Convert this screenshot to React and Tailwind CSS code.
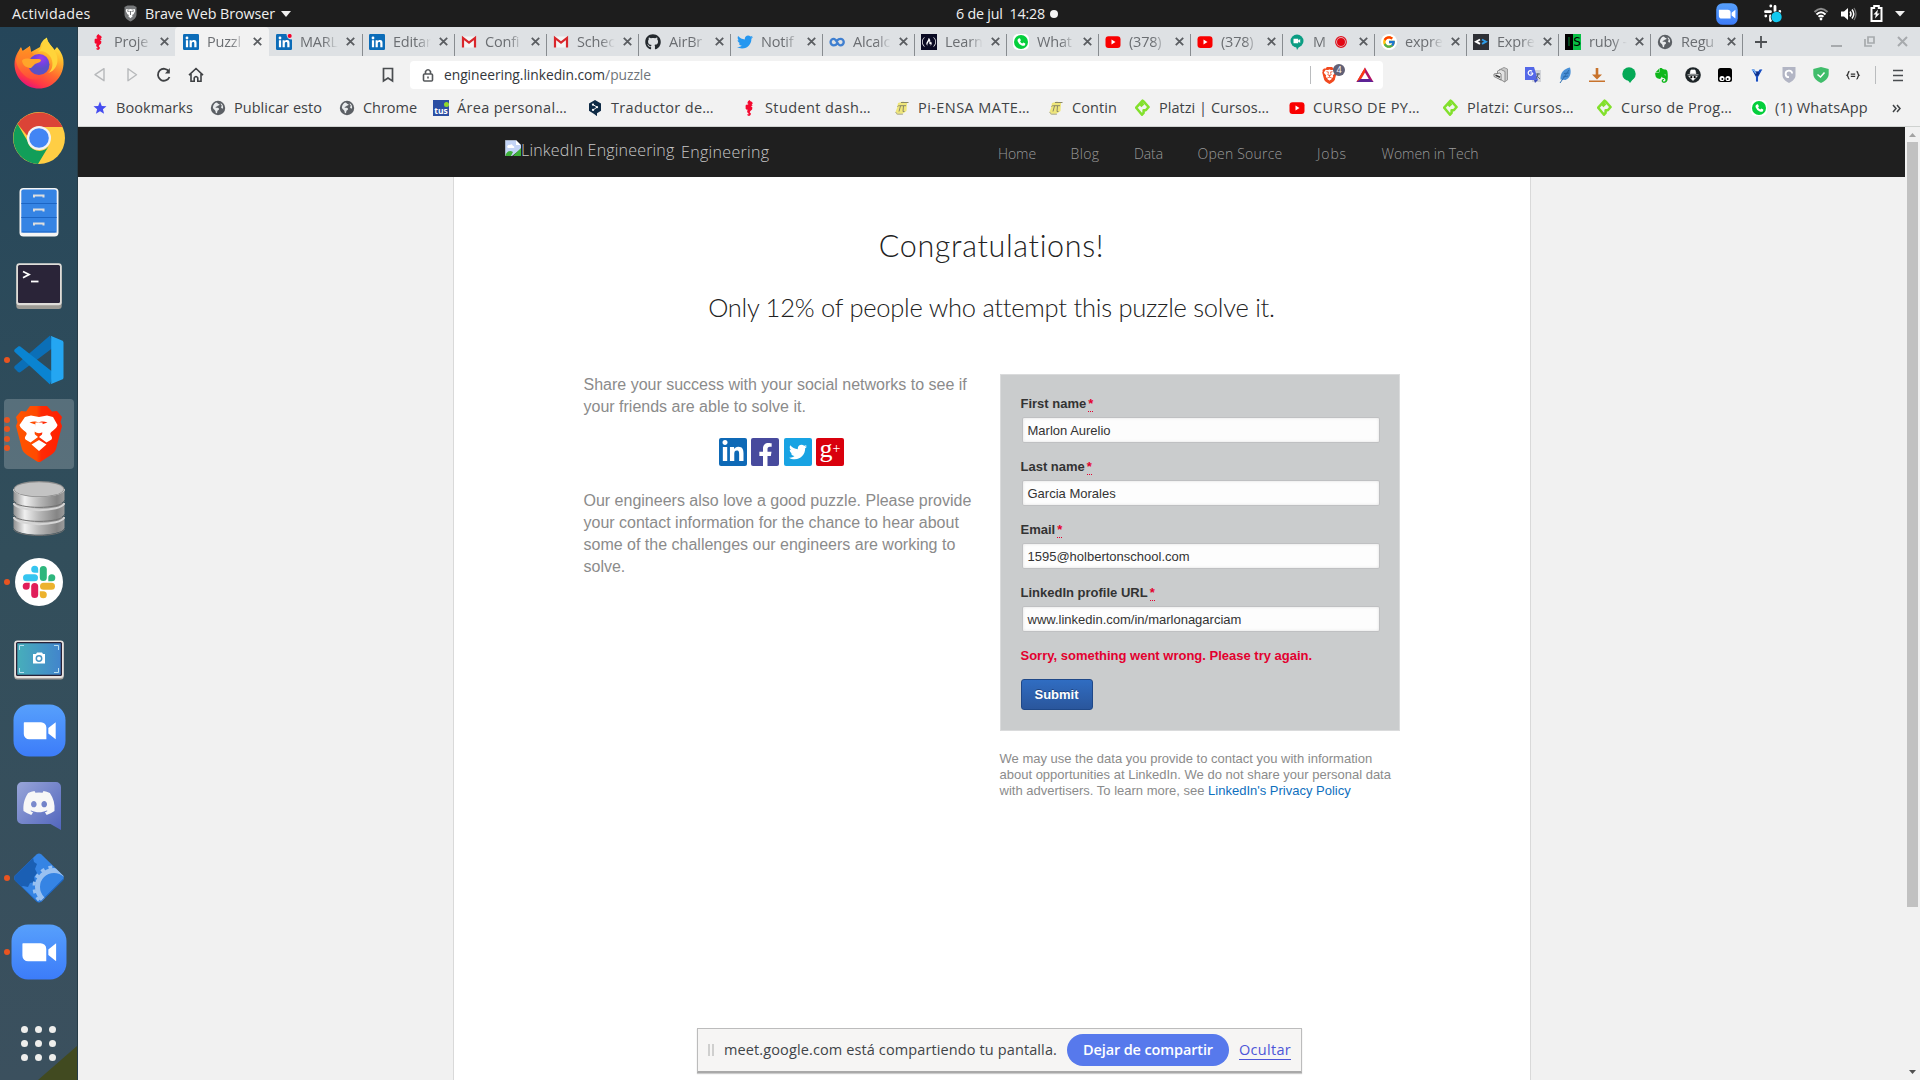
import React, { useLayoutEffect, useRef } from "react";
import { FaGithub, FaTwitter, FaFacebookF, FaLinkedinIn, FaDiscord, FaEvernote } from "react-icons/fa";
import { SiBrave, SiFreecodecamp } from "react-icons/si";
import { FcGoogle } from "react-icons/fc";

/* Text tracked so that it fills exactly `w` pixels. */
function Fit({ w, className = "", children }) {
  const ref = useRef(null);
  useLayoutEffect(() => {
    const el = ref.current;
    el.style.letterSpacing = "0px";
    const natural = el.getBoundingClientRect().width;
    el.style.letterSpacing = `${(w - natural) / el.textContent.length}px`;
  }, [w]);
  return (
    <span ref={ref} className={`inline-block whitespace-pre shrink-0 ${className}`}>
      {children}
    </span>
  );
}

/* ---------- small icons ---------- */
const LinkedIn = ({ dot }) => (
  <svg width="16" height="16" viewBox="0 0 16 16">
    <rect width="16" height="16" rx="1.2" fill="#0c6cb8" />
    <circle cx="4" cy="4" r="1.4" fill="#fff" />
    <path d="M2.9 6.2h2.2v7H2.9zM6.6 6.2h2.1v1c.4-.7 1.200-1.200 2.300-1.200 2 0 2.500 1.300 2.500 3.100v4.100h-2.200V9.600c0-1-.2-1.700-1.100-1.700s-1.400.7-1.400 1.700v3.600H6.600z" fill="#fff" />
    {dot && <path d="M10.500 0H16v5.500q-5.500 0-5.500-5.500z" fill="#dee1e4" />}
    {dot && <circle cx="13.700" cy="1.900" r="2" fill="#f5002b" />}
  </svg>
);
const Seahorse = () => (
  <svg width="16" height="16" viewBox="0 0 16 16" fill="#f5082f">
    <path d="M8.500 0l1 1.200 1.700.8.5 2-1 .2.900 1.500-1.700.3 1.500 1.500-.3 2-1.700 1.600-.7 1.200 1.200 1.200-.3 1.600-1.500.9-1.500-.6-.3-1.300 1.100.3.200-.9-1-.7-.5-1.500.6-1.500-1.500-.2-.8-1.600.6-1.200-.7-.4L5 4.700l1.300.1 1.300-.9-1.300-.6L7 1.300z" />
  </svg>
);
const Gmail = () => (
  <svg width="16" height="16" viewBox="0 0 16 16">
    <path d="M1.500 2.500h13v11h-13z" fill="#f4f4f4" />
    <path d="M2 13.500V4L8 8.600 14 4v9.500" fill="none" stroke="#d9262b" strokeWidth="2.200" />
  </svg>
);
const Globe = () => (
  <svg width="16" height="16" viewBox="0 0 16 16">
    <circle cx="8" cy="8" r="7.200" fill="#5c6065" />
    <path d="M6.500 2.500c1.300.2.900 1.300 2.400 1.400 1.100.1.800 1.500-.5 1.700-1.200.2-1 1.300-2.300 1.200-.8 0-.9 1 .4.900 1.500 0 2.700.3 2.500 1.500s-1.700 1-1.700 2.300c0 .9-.3 1.800-1.100 1.700-.8-.2-.3-1.700-1.100-2.700-.7-.9-2-1.500-2.200-3C3 5.200 4.700 2.800 6.500 2.500z" fill="#e9ebed" />
    <path d="M10.800 3.300c1.800 1 2.700 3.200 2.200 5.200-.8.200-1.600-.2-1.900-1-.3-.8.900-1.200.6-2-.3-.6-1.400-.9-.9-2.200z" fill="#e9ebed" />
  </svg>
);
const YouTube = () => (
  <svg width="16" height="16" viewBox="0 0 16 16">
    <rect x=".5" y="2.300" width="15" height="11.600" rx="3" fill="#f90000" />
    <path d="M6.500 5.500v5l4-2.500z" fill="#fff" />
  </svg>
);
const Infinity2 = () => (
  <svg width="16" height="16" viewBox="0 0 16 16" fill="none" stroke="#3f7fd0" strokeWidth="2.300">
    <path d="M8.500 9.200C7.500 10.500 6.200 11.300 4.800 11.300a3.200 3.200 0 010-6.500C7.800 4.800 8.200 11.300 11.500 11.300a3.200 3.200 0 000-6.500C10 4.800 9 5.400 8.200 6.500" />
  </svg>
);
const Fcc = () => (
  <span className="flex h-4 w-4 items-center justify-center bg-[#0a0a23] text-white">
    <SiFreecodecamp size={14} />
  </span>
);
const Whats = () => (
  <span className="flex h-4 w-4 items-center justify-center rounded-[5px] bg-white">
    <span className="flex h-[14px] w-[14px] items-center justify-center rounded-full bg-[#05cf3c] text-white">
      <svg width="10" height="10" viewBox="0 0 10 10"><path d="M2.700 1.500l1.200-.2 1 2-.8 1.200q.8 1.500 2.200 2L7.300 5.600l2 1-.2 1.300q-1.200 1.500-3.400.5Q2.500 7 1.500 4 1.300 2.300 2.700 1.500z" fill="#fff" /></svg>
    </span>
  </span>
);
const Meet = () => (
  <svg width="16" height="16" viewBox="0 0 16 16">
    <circle cx="8" cy="7" r="6.500" fill="#0b9d83" />
    <path d="M7 12l3 .8L8 16z" fill="#0b9d83" />
    <path d="M4.500 4.800h4.700v1.600l2-1.400v4l-2-1.400v1.600H4.500z" fill="#fff" />
  </svg>
);
const GoogleIcon = () => (
  <span className="flex h-4 w-4 items-center justify-center rounded-full bg-white">
    <FcGoogle size={14} />
  </span>
);
const Code = () => (
  <svg width="16" height="16" viewBox="0 0 16 16">
    <rect width="16" height="16" fill="#2e3036" />
    <path d="M7 5.500L3 7.700 7 9.900" stroke="#fff" strokeWidth="1.900" fill="none" />
    <path d="M9 5.500l4 2.200-4 2.200" stroke="#2f9be8" strokeWidth="1.900" fill="none" />
  </svg>
);
const IS = () => (
  <span className="flex h-4 w-4 font-['DejaVu_Sans'] text-[12px] leading-4">
    <span className="w-2 bg-black text-center text-[#0a6b2b]">I</span>
    <span className="w-2 bg-[#07c044] text-center text-black">S</span>
  </span>
);
const Star = () => (
  <svg width="16" height="16" viewBox="0 0 16 16" fill="#454cf0">
    <path d="M8 1.500l1.800 4.400 4.700.3-3.600 3 1.200 4.600L8 11.300l-4.100 2.500 1.200-4.600-3.600-3 4.700-.3z" />
  </svg>
);
const Tus = () => (
  <span className="relative flex h-4 w-4 items-end justify-center bg-[#2c4fa3] font-['Open_Sans'] text-[8.500px] font-bold leading-[11px] text-white">
    tus
    <span className="absolute right-0 top-0.5 h-[5px] w-[5px] rounded-full bg-[#93d82b]" />
  </span>
);
const Deepl = () => (
  <svg width="16" height="16" viewBox="0 0 16 16">
    <path d="M8 0l6 3.500v7.300L10 13.300v2.900L7.500 14.300 2 10.800V3.500z" fill="#0f2b46" />
    <path d="M6 4.500l4 2.700-4 2.900" stroke="#fff" strokeWidth=".9" fill="none" />
    <circle cx="6" cy="4.700" r="1.100" fill="#fff" /><circle cx="10" cy="7.200" r="1.100" fill="#fff" /><circle cx="6" cy="9.900" r="1.100" fill="#fff" />
  </svg>
);
const Pi = () => (
  <svg width="16" height="16" viewBox="0 0 16 16">
    <path d="M4 3l5-1.500L13 3l-.5 8-5 3.500H2.500L1.500 12 3 8z" fill="#efe67a" />
    <path d="M7 2.500h7.500M3.500 6.500q1-1 2-.8H12M6.500 6L5 11.500M9.500 6L9 11.500h1.500" stroke="#8b8868" strokeWidth="1" fill="none" />
    <path d="M1.500 12l1.800 2.200H9" stroke="#a9a9a0" fill="none" />
  </svg>
);
const Platzi = () => (
  <svg width="16" height="18" viewBox="0 0 16 18" fill="none" stroke="#82e02c" strokeWidth="2.500" strokeLinejoin="round">
    <path d="M8.500 4.500L5.500 7.200M9.500 3.200L7.600 1.600 1.200 8.700l5.800 7 1.600-1.800v-2.700h2.200L13.600 8 9.200 3.200" />
  </svg>
);

/* ---------- top bar icons ---------- */
const Camera = ({ size, inner }) => (
  <svg width={size} height={size} viewBox="0 0 54 54">
    <defs>
      <linearGradient id="zoomblue" x1="0" y1="0" x2="0" y2="1">
        <stop offset="0" stopColor="#57a0fc" /><stop offset="1" stopColor="#3c7cf9" />
      </linearGradient>
    </defs>
    <rect x=".5" y=".5" width="53" height="53" rx="16" fill="url(#zoomblue)" />
    <g transform={inner ? "translate(-6.700 -6.700) scale(1.250)" : undefined}>
      <path d="M11.500 18.500h17a5.500 5.500 0 015.500 5.500v12H16.500a5.500 5.500 0 01-5.500-5.500v-11.500zM36 24.500l7.500-6V36l-7.500-6z" fill="#fff" />
    </g>
  </svg>
);

function TopBar() {
  return (
    <header className="flex h-[27px] shrink-0 items-center bg-[#1d1d1d] font-['Open_Sans'] text-[14.300px] leading-[26px] text-[#efefef]">
      <div className="flex w-[123px] pl-3"><Fit w={78.500}>Actividades</Fit></div>
      <div className="flex w-[833px] items-center">
        <svg width="15" height="17" viewBox="0 0 15 17">
          <path d="M1.500 2l3-1.500h6l3 1.500v7c0 4-3 6-6 7.500-3-1.500-6-3.500-6-7.500z" fill="#77797b" />
          <path d="M3.200 4l2.300.6L7.500 4l2 .6L11.800 4l.4 2-1.700 3.200-1.500.8.700 1.300-2.200 2-2.200-2 .7-1.300-1.500-.8L2.800 6z" fill="#fff" />
          <path d="M4 5.800l2.500.7M11 5.800l-2.500.7M7.500 6v4" stroke="#77797b" />
        </svg>
        <Fit w={130} className="ml-[7px]">Brave Web Browser</Fit>
        <svg className="ml-1.5" width="10" height="6"><path d="M0 0h10L5 6z" fill="#efefef" /></svg>
      </div>
      <div className="flex w-[760px] items-center"><Fit w={89}>6 de jul  14:28</Fit><span className="ml-[5px] h-2 w-2 rounded-full bg-[#f4f4f4]" /></div>
      <Camera size={22} inner />
      <svg className="ml-[25px]" width="20" height="19" viewBox="0 0 20 19">
        <g stroke="#fff" strokeWidth="2.800" strokeLinecap="round"><path d="M7.800 2v.1M2.500 7.700h5M12 2.500v4.500M16.800 7.500v.1M2.800 12v.1M7.500 12v4.500" /></g>
        <circle cx="13.500" cy="13" r="5.800" fill="#1d1d1d" /><circle cx="13.500" cy="13" r="5.200" fill="#12c9f0" />
      </svg>
      <svg className="ml-[30px]" width="16" height="14" viewBox="0 0 16 14" fill="none" strokeWidth="2">
        <path d="M1.500 5Q8 -1.500 14.500 5" stroke="#8c8c8c" /><path d="M3.500 7.500Q8 3 12.500 7.500" stroke="#fff" /><path d="M5.500 9.800Q8 7.600 10.500 9.800" stroke="#fff" /><circle cx="8" cy="12" r="1.400" fill="#fff" stroke="none" />
      </svg>
      <svg className="ml-3" width="16" height="14" viewBox="0 0 16 14" fill="none">
        <path d="M0 4.500h3L7 1v12L3 9.500H0z" fill="#fff" /><path d="M9 4.500q2 2.500 0 5M11 2.500q3.500 4.500 0 9" stroke="#fff" strokeWidth="1.500" /><path d="M13 1q4 6 0 12" stroke="#777" strokeWidth="1.300" />
      </svg>
      <svg className="ml-[13px]" width="13" height="17" viewBox="0 0 13 17">
        <path d="M1.500 3h2.700V1h4.600v2h2.700v13h-10z" fill="none" stroke="#fff" strokeWidth="2" /><path d="M8 4.500L3.500 9.500h2.300L5 13.500l4.700-5H7.200z" fill="#fff" />
      </svg>
      <svg className="ml-3" width="10" height="6"><path d="M0 0h10L5 5.500z" fill="#efefef" /></svg>
    </header>
  );
}

/* ---------- dock ---------- */
const Firefox = () => (
  <svg width="50" height="52" viewBox="0 0 50 52">
    <defs>
      <linearGradient id="ff1" x1=".8" y1="0" x2=".3" y2="1"><stop offset="0" stopColor="#fff44f" /><stop offset=".3" stopColor="#ffbd2c" /><stop offset=".6" stopColor="#ff6a2e" /><stop offset=".85" stopColor="#ff3647" /><stop offset="1" stopColor="#e3107f" /></linearGradient>
      <radialGradient id="ff2" cx=".6" cy=".2"><stop offset="0" stopColor="#a23ce8" /><stop offset=".6" stopColor="#7242e0" /><stop offset="1" stopColor="#5b51c4" /></radialGradient>
      <linearGradient id="ff3" x1="0" y1="0" x2="0" y2="1"><stop offset="0" stopColor="#ff9420" /><stop offset=".5" stopColor="#ff7a2a" /><stop offset="1" stopColor="#ff4a3c" /></linearGradient>
    </defs>
    <path d="M.5 27C.5 19 4 15 7 10l1.500 4L16 9l1 6 9-5C27 5 30 2 33 .5c0 5 4 7 7.500 12.500L43 10c5 6 7 11 6.500 17.500C48.500 41 38 51.500 25 51.500S.5 41 .5 27z" fill="url(#ff1)" />
    <path d="M24 15c4-2 9 0 12 4 4 6 3 14-2 17 7-2 11-9 9-17-2-7-8-11-10-17-6 5-4 9-9 13z" fill="#ffd43a" />
    <circle cx="25" cy="27.500" r="10.500" fill="url(#ff2)" />
    <path d="M2 24c1-6 3-10 5-13l2 4 7-6c0 4 1 7 4 8l-5 5c-2 5-1 10 2 13 4 4 10 5 15 3-6 6-16 6-22 0-4-4-7-8-8-14z" fill="url(#ff3)" />
    <path d="M8 24c0-2 4-3 8-2h8c3 0 4 1 2 3l-5 2-4 4c-4 0-8-2-9-7z" fill="#ffa52a" />
  </svg>
);
const Chrome = () => (
  <svg width="52" height="52" viewBox="0 0 52 52">
    <circle cx="26" cy="26" r="26" fill="#ffce44" />
    <path d="M4.500 12A26 26 0 0149.500 15H26a12 12 0 00-11.500 9z" fill="#db4437" />
    <path d="M4.500 12A26 26 0 0025 52l10.500-17.500A12 12 0 0114.500 29z" fill="#129e59" />
    <circle cx="26" cy="26" r="12" fill="#f3f3f3" /><circle cx="26" cy="26" r="9.800" fill="#4285f4" />
  </svg>
);
const Files = () => (
  <svg width="40" height="50" viewBox="0 0 40 50">
    <rect x=".5" y="1" width="39" height="48.500" rx="4" fill="#f5f5f4" /><rect x="2.300" y="2.500" width="35.400" height="43" rx="2" fill="#3584e4" />
    <path d="M2.300 16.500h35.400M2.300 30.500h35.400M2.300 45h35.400" stroke="#1c65c4" />
    {[8, 22, 36].map((y) => <path key={y} d={`M15 ${y + 2.500}v-2h9.500v2`} fill="none" stroke="#dedede" strokeWidth="2" />)}
  </svg>
);
const Terminal = () => (
  <svg width="46" height="46" viewBox="0 0 46 46">
    <rect x=".3" y="2" width="45.400" height="44" rx="3" fill="#9c9a94" /><rect x=".3" y=".3" width="45.400" height="42" rx="3" fill="#dfddd9" /><rect x="2" y="2" width="42" height="38" rx="1.500" fill="#2a2438" />
    <path d="M7 8.500l6 3-6 3.200" fill="none" stroke="#fff" strokeWidth="1.800" /><path d="M15 18.500h7.500" stroke="#fff" strokeWidth="1.800" />
  </svg>
);
const VsCode = () => (
  <svg width="50" height="50" viewBox="0 0 50 50">
    <path d="M36 .5L.8 31c-.8.8-.8 2 0 2.800L4 37c.8.6 1.900.6 2.600 0L40 12z" fill="#0b6fb7" />
    <path d="M36 49.500L.8 17c-.8-.8-.8-2 0-2.800L4 11.800c.8-.6 1.900-.6 2.600 0L40 38z" fill="#0a84d1" />
    <path d="M36 .5l12 5c1 .4 1.500 1.200 1.500 2.300v34.400c0 1.100-.5 1.900-1.500 2.300l-12 5c1 0 1.200-1 1.200-2V2.500c0-1-.2-2-1.200-2z" fill="#24a6f2" />
  </svg>
);
const Brave = () => (
  <svg width="48" height="56" viewBox="0 0 48 56">
    <defs><linearGradient id="brv"><stop offset="0" stopColor="#ff5500" /><stop offset=".45" stopColor="#ff4a00" /><stop offset=".55" stopColor="#ff2a05" /><stop offset="1" stopColor="#ff2000" /></linearGradient></defs>
    <path d="M15 0h17l5 5.500 5-.5 5 6-1.500 5L47 20 41 43c-1 3-3 4.500-5 6l-10 6.500q-2 1-4 0L12 49c-2-1.500-4-3-5-6L1 20l1.500-4L1 11l5-6 5 .5z" fill="url(#brv)" />
    <path d="M10 11l6-1.500 8 1.500 8-1.500 6 1.500 4.500 8c-1 4-6 6-7 8s3 4 1 6.500l-5 3-7.500-5.500 3-2.500c1-1-1-8-.5-10l6-2c-4-1.500-7-1-8.500 0h-1c-1.500-1-4.500-1.500-8.500 0l6 2c.5 2-1.500 9-.5 10l3 2.500-7.500 5.500-5-3c-2-2.500 2-4.500 1-6.500s-6-4-7-8z" fill="#fff" />
    <path d="M20.500 16.500l-1 9q4.500 3.500 9 0l-1-9zM16.500 38.500l7.500-4.500 7.500 4.500-7.500 6.500z" fill="#fff" />
  </svg>
);
const Database = () => (
  <svg width="52" height="56" viewBox="0 0 52 56">
    <defs><linearGradient id="dbg"><stop offset="0" stopColor="#909090" /><stop offset=".22" stopColor="#f0f0f0" /><stop offset=".5" stopColor="#b9b9b9" /><stop offset=".85" stopColor="#858585" /><stop offset="1" stopColor="#9b9b9b" /></linearGradient></defs>
    {[34, 20, 6].map((y) => (
      <g key={y}>
        <path d={`M.5 ${y + 3}v11c3 9 48 9 51 0V${y + 3}z`} fill="url(#dbg)" />
        <path d={`M.5 ${y + 3}c3 9.500 48 9.500 51 0`} fill="none" stroke="#d5d5d5" strokeWidth="2" />
        <path d={`M.5 ${y + 15}c3 8.500 48 8.500 51 0`} fill="none" stroke="#717171" />
      </g>
    ))}
    <ellipse cx="26" cy="9" rx="25.500" ry="8" fill="#8c8c8c" /><ellipse cx="26" cy="9.200" rx="24.500" ry="7" fill="#c3c3c3" />
  </svg>
);
const Slack = () => (
  <svg width="48" height="48" viewBox="0 0 48 48">
    <circle cx="24" cy="24" r="24" fill="#fff" />
    <g strokeWidth="7" strokeLinecap="round">
      <path d="M11.500 19.700h8" stroke="#36c5f0" /><path d="M28.300 11.500v8" stroke="#2eb67d" /><path d="M28.500 28.300h8" stroke="#ecb22e" /><path d="M19.700 28.500v8" stroke="#e01e5a" />
    </g>
    <path d="M23.200 14.700h-3.500a3.500 3.500 0 113.500-3.500z" fill="#36c5f0" /><path d="M33.300 23.200v-3.500a3.500 3.500 0 113.500 3.500z" fill="#2eb67d" /><path d="M24.800 33.300h3.500a3.500 3.500 0 11-3.500 3.500z" fill="#ecb22e" /><path d="M14.700 24.800v3.500a3.500 3.500 0 11-3.500-3.500z" fill="#e01e5a" />
  </svg>
);
const Screenshot = () => (
  <svg width="50" height="40" viewBox="0 0 50 40">
    <defs><linearGradient id="scr"><stop offset="0" stopColor="#47aebb" /><stop offset="1" stopColor="#4285cc" /></linearGradient></defs>
    <rect x=".3" y="1" width="49.400" height="38.500" rx="3" fill="#a8a29e" /><rect x=".3" y=".5" width="49.400" height="37.500" rx="3" fill="#e7e3e0" />
    <rect x="2" y="2" width="46" height="34" rx="1.500" fill="#282238" /><rect x="3.300" y="3.300" width="43.400" height="31.400" fill="url(#scr)" />
    <path d="M5.500 10V5.500H10M40 5.500h4.500V10M5.500 28v4.500H10M40 32.500h4.500V28" fill="none" stroke="#b9dff0" />
    <path d="M19 14h3l1-1.500h5l1 1.500h2v9.500H19z" fill="#fff" /><circle cx="25" cy="18.500" r="2.700" fill="#fff" stroke="#4795c3" strokeWidth="1.500" />
  </svg>
);
const Discord = () => (
  <div className="relative flex h-12 w-11 items-start justify-center">
    <svg className="absolute inset-0" width="44" height="48" viewBox="0 0 44 48">
      <defs><linearGradient id="dsc" x1="0" y1="0" x2="1" y2="1"><stop offset="0" stopColor="#98a5d8" /><stop offset="1" stopColor="#5165bd" /></linearGradient></defs>
      <path d="M5 0h34a5 5 0 015 5v43L33.500 42H5a5 5 0 01-5-5V5a5 5 0 015-5z" fill="url(#dsc)" />
    </svg>
    <FaDiscord className="relative mt-1 text-[#f7f7f7]" size={34} />
  </div>
);
const Gear = () => (
  <svg width="50" height="50" viewBox="0 0 50 50">
    <defs><clipPath id="dia"><path d="M22.500 1.500q2.500-2 5 0L49 22.500q1.500 2.500 0 5L27.500 48.500q-2.500 2-5 0L1 27.500q-1.500-2.500 0-5z" /></clipPath></defs>
    <g clipPath="url(#dia)">
      <rect width="50" height="50" fill="#3584e4" /><path d="M0 0h18l2 9 3 2-2 5 2 4-3 4 1 5-5 1-2 4-5-1-9 4z" fill="#1a5fb4" />
      <circle cx="40" cy="34" r="16.500" fill="none" stroke="#99c1f1" strokeWidth="5" /><circle cx="40" cy="34" r="20" fill="none" stroke="#99c1f1" strokeWidth="3" strokeDasharray="3.800 4.200" />
      <path d="M0 27l25 24 25-25" fill="none" stroke="#1a5fb4" strokeWidth="1.500" />
    </g>
  </svg>
);

const dock = [
  { el: <Firefox />, shift: "pb-0.5" }, { el: <Chrome />, shift: "" }, { el: <Files />, shift: "" }, { el: <Terminal />, shift: "" },
  { el: <VsCode />, dots: 1, shift: "" }, { el: <Brave />, dots: 4, shift: "", on: true }, { el: <Database />, shift: "" }, { el: <Slack />, dots: 1, shift: "" },
  { el: <Screenshot />, shift: "pt-2" }, { el: <Camera size={53} />, shift: "" }, { el: <Discord />, shift: "pt-1" }, { el: <Gear />, dots: 1, shift: "" }, { el: <Camera size={56} />, dots: 1, shift: "" },
];

function Dock() {
  return (
    <aside className="relative flex w-[78px] shrink-0 flex-col border-r border-[#263c48] bg-linear-to-b from-[#25465a] via-[#324e5b] to-[#3b505e]">
      {dock.map((d, i) => (
        <div key={i} className="relative flex h-[74px] w-full shrink-0 items-center justify-center pl-px">
          {d.on && <span className="absolute left-1 top-0.5 h-[70px] w-[70px] rounded-[4px] bg-white/20" />}
          {d.dots && (
            <span className="absolute inset-y-0 left-1 flex flex-col items-center justify-center gap-[3.500px]">
              {Array.from({ length: d.dots }, (_, k) => <span key={k} className="h-[6px] w-[6px] rounded-full bg-[#e95420]" />)}
            </span>
          )}
          <span className={`relative ${d.shift}`}>{d.el}</span>
        </div>
      ))}
      <div className="mt-[37px] ml-[21px] grid w-[35px] grid-cols-3 gap-[7px]">
        {Array.from({ length: 9 }, (_, k) => <span key={k} className="h-[7px] w-[7px] rounded-full bg-[#eeeeec]" />)}
      </div>
      <svg className="absolute bottom-0 right-0" width="39" height="34"><path d="M39 0v34H0z" fill="#414a20" /></svg>
    </aside>
  );
}

/* ---------- browser chrome ---------- */
const tabs = [
  [<Seahorse />, "Proje", "w-[97px] pl-3"], [<LinkedIn />, "Puzzl", "w-[94px] pl-2", "on"], [<LinkedIn dot />, "MARL", "w-[93px] pl-[7px]"], [<LinkedIn />, "Editar"],
  [<Gmail />, "Confi"], [<Gmail />, "Schec"], [<FaGithub size={16} color="#24292e" />, "AirBr"], [<FaTwitter size={16} color="#2497f0" />, "Notif"],
  [<Infinity2 />, "Alcalc"], [<Fcc />, "Learn"], [<Whats />, "What"], [<YouTube />, "(378)"], [<YouTube />, "(378)"], [<Meet />, "M", "", "rec"],
  [<GoogleIcon />, "expre"], [<Code />, "Expre"], [<IS />, "ruby -"], [<Globe />, "Regu"],
];

function Tabs() {
  return (
    <div className="flex h-[29px] items-stretch bg-[#dee1e4] font-['Open_Sans'] text-[14.500px] leading-7 text-[#6b6e72]">
      {tabs.map(([icon, label, cls, state], i) => (
        <div key={i} className={`flex shrink-0 items-center ${cls || "w-[92px] pl-[7px]"} ${state === "on" ? "rounded-t bg-[#f2f2f2]" : ""}`}>
          <span className="flex w-4 shrink-0 justify-center">{icon}</span>
          <span className={`ml-2 whitespace-pre tracking-[-0.2px] [mask-image:linear-gradient(to_right,black_62%,transparent)] ${state === "rec" ? "w-[16px]" : "w-[38px]"}`}>{label}</span>
          {state === "rec" && (
            <svg className="ml-[6px] mr-[4px]" width="12" height="12"><circle cx="6" cy="6" r="5.300" fill="none" stroke="#e0131f" strokeWidth="1.200" /><circle cx="6" cy="6" r="4" fill="#e30613" /></svg>
          )}
          <svg className="ml-[8px]" width="9" height="9" stroke="#5a5d61" strokeWidth="1.800"><path d="M.8.8l7.400 7.400M8.200.8L.8 8.200" /></svg>
          {i > 1 && <span className="-mr-px ml-auto h-[22px] w-px self-end bg-[#888c90]" />}
        </div>
      ))}
      <svg className="ml-[13px] self-center" width="12" height="12" stroke="#4d5053" strokeWidth="1.800"><path d="M6 0v12M0 6h12" /></svg>
      <div className="ml-auto mr-[12px] flex items-center gap-[22px]">
        <svg width="11" height="10" stroke="#a7aaad" strokeWidth="2"><path d="M0 9h11" /></svg>
        <svg width="11" height="11" fill="none" stroke="#a7aaad" strokeWidth="1.700"><path d="M4 1h6v6H4zM1 3v7h7" /></svg>
        <svg width="11" height="11" stroke="#a7aaad" strokeWidth="2"><path d="M1 1l9 9M10 1l-9 9" /></svg>
      </div>
    </div>
  );
}

const extensions = [
  <svg width="16" height="16"><path d="M6 3l5-2.500 3.500 1.500v11L11 15V4.500z" fill="#c9c9c9" stroke="#9a9a9a" /><path d="M4.500 4L8 2.500 12 4.500V15L4.500 11z" fill="#e3e3e3" stroke="#8f8f8f" /><path d="M1 7l6-1 1 1v6L1 9.500z" fill="#f5f5f5" stroke="#666" strokeWidth=".8" /><path d="M2.500 8.300l4.500 1.900" stroke="#333" strokeWidth="1.500" /></svg>,
  <svg width="16" height="16"><rect x="7" y="3" width="9" height="12" fill="#d1d3d8" /><path d="M0 0h9l4 13H0z" fill="#5468e8" /><path d="M9 13h4l-3 3z" fill="#3a49b8" /><path d="M8 6H5.500M7.800 6A2.300 2.300 0 117 4.200" stroke="#fff" fill="none" strokeWidth="1.200" /><path d="M11 7h4M13 6v2l-2 4M12 9l3 3" stroke="#637080" /></svg>,
  <svg width="16" height="16"><path d="M13 .5c1.500 5 .5 10.500-4.500 12.500L3.500 12.500C3 6 7 1.500 13 .5z" fill="#4a90d6" /><path d="M12 3L3 16M6 10l5-1M7 6.500l5-.5" stroke="#2c6cae" /></svg>,
  <svg width="16" height="16" fill="#c8732c"><path d="M6.700 1h2.600v6.500H13L8 12.500 3 7.500h3.700z" /><path d="M0 13.500h16V15H0z" /></svg>,
  <svg width="16" height="16" fill="#05a956"><circle cx="8" cy="7" r="6.700" /><path d="M6 12h6l-3 4z" /></svg>,
  <FaEvernote size={17} color="#0fb71b" />,
  <svg width="16" height="16"><circle cx="8" cy="8" r="7.800" fill="#1e2528" /><path d="M5 6.500L6 3h4l1 3.500zM2.500 7.800h11M3.800 9.300h8.400L8 13.500z" fill="#fff" stroke="#fff" strokeWidth=".7" /><circle cx="6.300" cy="10.200" r="1.100" /><circle cx="9.700" cy="10.200" r="1.100" /></svg>,
  <svg width="16" height="16"><rect x="1" y="1" width="14" height="14" rx="2.500" /><circle cx="5" cy="11.500" r="2.600" fill="#fff" /><circle cx="11" cy="11.500" r="2.600" fill="#fff" /><circle cx="5.300" cy="12" r="1" /><circle cx="10.700" cy="12" r="1" /></svg>,
  <svg width="16" height="16"><path d="M2 2h3.500L8 5.500 10.500 2H14L9.500 10v5h-3v-5z" fill="#1a4fc0" stroke="#fff" strokeWidth=".8" /><circle cx="8" cy="6.500" r="2.200" fill="#0f2f86" /><path d="M3 3l2 .3L7 6.500" stroke="#7fbaf5" fill="none" strokeWidth="1.400" /></svg>,
  <svg width="16" height="16"><path d="M1.500 0h13v8c0 4-3 6-6.500 8-3.500-2-6.500-4-6.500-8z" fill="#b2b5c4" /><path d="M11.200 6.500A3.300 3.300 0 108 10.200" fill="none" stroke="#fff" strokeWidth="1.800" /></svg>,
  <svg width="16" height="16"><path d="M8 0l7.700 2v5c0 4.500-4 7-7.700 9C4.300 14 .3 11.500.3 7V2z" fill="#40bd6b" /><path d="M4.500 7.500L7.500 10l4-4.500" fill="none" stroke="#fff" strokeWidth="1.500" /></svg>,
  <svg width="16" height="16" fill="none" stroke="#303030" strokeWidth="1.300"><path d="M4.500 4.500C2.500 4.500 4 7 2 8.200 4 9.500 2.500 12 4.500 12M11.500 4.500c2 0 .5 2.500 2.500 3.700-2 1.300-.5 3.800-2.500 3.800M5.800 7.200h4.400M5.800 9.400h4.400" /></svg>,
];

function Toolbar() {
  return (
    <div className="flex h-[38px] items-center bg-[#f2f2f2] pl-[14px]">
      <div className="flex items-center gap-4">
        <svg width="16" height="16" fill="none" stroke="#b7b9bb" strokeWidth="1.400" strokeLinejoin="round"><path d="M12 1.700v12L3 7.700z" /></svg>
        <svg width="16" height="16" fill="none" stroke="#b7b9bb" strokeWidth="1.400" strokeLinejoin="round"><path d="M4 1.700v12l8.500-6z" /></svg>
        <svg width="16" height="16" fill="none" stroke="#3f4144" strokeWidth="1.800"><path d="M13 4.500A6 6 0 1013.500 10" /><path d="M13.800 1v5.500H9z" fill="#3f4144" stroke="none" /></svg>
        <svg width="16" height="16" fill="none" stroke="#3f4144" strokeWidth="1.600"><path d="M1 8.200L8 1.500l7 6.700M3 7v7.300h3.200V11q1.800-3 3.600 0v3.300H13V7" /></svg>
      </div>
      <svg className="ml-[175px]" width="16" height="16" fill="none" stroke="#4a4d50" strokeWidth="1.700"><path d="M4.500 1.500h9v12.500L9 11l-4.500 3z" /></svg>
      <div className="ml-[15px] flex h-7 w-[973px] items-center rounded bg-white pl-[12px]">
        <svg width="12" height="14" fill="none" stroke="#55585b" strokeWidth="1.600"><rect x="1.500" y="6" width="9" height="7" rx="1" /><path d="M3.500 6V3.500q2.500-3.500 5 0V6M6 8.500v2" /></svg>
        <Fit w={207} className="ml-2.5 font-['Open_Sans'] text-[13.800px] text-[#33373b]">engineering.linkedin.com<span className="text-[#70757a]">/puzzle</span></Fit>
        <span className="ml-auto h-[18px] w-px bg-[#babcbe]" />
        <span className="relative ml-2.5 mr-[18px] w-[17px] text-[#f1491f]">
          <SiBrave size={17} />
          <span className="absolute -top-[3px] left-[12px] flex h-3 w-3 items-center justify-center rounded-full bg-[#616075] font-['Open_Sans'] text-[9px] leading-3 text-white">4</span>
        </span>
        <svg className="mr-[9px]" width="18" height="16"><path d="M9 .5L17.500 15H.5z" fill="#b31365" /><path d="M9 .5L.5 15l4-2L9 5z" fill="#ff3a10" /><path d="M.5 15h17l-4-3h-9z" fill="#5d2396" /><path d="M9 5.500l3.800 6.500H5.200z" fill="#fff" /></svg>
      </div>
      <div className="ml-[102px] flex">
        {extensions.map((e, i) => <span key={i} className="flex w-8 justify-center">{e}</span>)}
      </div>
      <span className="ml-1.5 h-[18px] w-px bg-[#babcbe]" />
      <svg className="ml-[17px]" width="10" height="13" stroke="#4a4d50" strokeWidth="1.600"><path d="M0 1.500h10M0 6.500h10M0 11.500h10" /></svg>
    </div>
  );
}

const bookmarks = [
  [<Star />, "Bookmarks", 77, "w-[118px]"], [<Globe />, "Publicar esto", 88, "w-[129px]"], [<Globe />, "Chrome", 54, "w-[94px]"], [<Tus />, "Área personal…", 110, "w-[154px]"],
  [<Deepl />, "Traductor de…", 103, "w-[154px]"], [<Seahorse />, "Student dash…", 106, "w-[153px]"], [<Pi />, "Pi-ENSA MATE…", 112, "w-[154px]"], [<Pi />, "Contin", 45, "w-[87px]"],
  [<Platzi />, "Platzi | Cursos…", 110, "w-[154px]"], [<YouTube />, "CURSO DE PY…", 107, "w-[154px]"], [<Platzi />, "Platzi: Cursos…", 107, "w-[154px]"], [<Platzi />, "Curso de Prog…", 111, "w-[154px]"], [<Whats />, "(1) WhatsApp", 93, "w-[140px]"],
];

function Bookmarks() {
  return (
    <div className="flex h-[33px] items-center border-b border-[#cfd2d0] bg-[#f2f2f2] pb-1 pl-[14px] font-['Open_Sans'] text-[14.500px] text-[#3f4245]">
      {bookmarks.map(([icon, label, w, cls], i) => (
        <div key={i} className={`flex shrink-0 items-center gap-2 ${cls}`}>
          <span className="w-4 shrink-0">{icon}</span>
          <Fit w={w}>{label}</Fit>
        </div>
      ))}
      <svg className="ml-[1px]" width="10" height="9" fill="none" stroke="#3f4245" strokeWidth="1.500"><path d="M1 1l3 3.500L1 8M5 1l3 3.500L5 8" /></svg>
    </div>
  );
}

/* ---------- page ---------- */
function SiteHeader() {
  return (
    <div className="flex h-[50px] shrink-0 items-start bg-[#1f1f1f] pl-[427px] font-['Open_Sans'] font-light text-[#c8c8c8]">
      <svg className="mt-[13px]" width="16" height="16"><path d="M0 0h11l5 5v4L7 16H0z" fill="#c3d4f6" /><path d="M2 7q1-3 3-2 2-2 3 1 2 0 1 2H3z" fill="#fff" /><path d="M0 16q3-7 8-4l-2 4z" fill="#3fb13a" /><path d="M16 8v8H8z" fill="#3fb13a" /><path d="M11 0v5h5z" fill="#fff" /><path d="M0 0h11l5 5M0 0v16" stroke="#8a8f96" fill="none" /></svg>
      <Fit w={153.500} className="mt-[11px] text-[16px] leading-6">LinkedIn Engineering</Fit>
      <Fit w={88.500} className="ml-[6.500px] mt-[13px] text-[16px] leading-6">Engineering</Fit>
      <nav className="ml-[228.500px] mt-[17px] flex gap-[34.500px] text-[14px] leading-5 text-[#9a9a9a]">
        <Fit w={38}>Home</Fit><Fit w={29}>Blog</Fit><Fit w={29}>Data</Fit><Fit w={85}>Open Source</Fit><Fit w={30}>Jobs</Fit><Fit w={97}>Women in Tech</Fit>
      </nav>
    </div>
  );
}

const Field = ({ label, value }) => (
  <div className="mb-4">
    <div className="flex h-4 text-[13px] font-bold leading-4 text-[#333]">
      {label}
      <span className="ml-[2px] h-[16px] border-b border-dotted border-[#e3002f] text-[#e3002f]">*</span>
    </div>
    <div className="ml-px mt-[5px] flex h-[26px] w-[358px] items-center rounded-[2px] border border-[#bfc0c2] bg-[#fdfdfd] pl-[5px] pt-0.5 text-[13px] text-[#333] shadow-[inset_0_0_3px_#ddd]">{value}</div>
  </div>
);

function Puzzle() {
  return (
    <main className="ml-[375px] flex-1 w-[1078px] border-x border-[#d9d9d9] bg-white font-['Liberation_Sans',sans-serif]">
      <div className="flex flex-col items-center pr-px pt-[46px] font-['Lato'] font-light text-[#222]">
        <Fit w={226} className="text-[30.500px] leading-[44px]">Congratulations!</Fit>
        <Fit w={566} className="mt-[18px] text-[25.500px] leading-[44px]">Only 12% of people who attempt this puzzle solve it.</Fit>
      </div>
      <div className="mt-[46px] flex pl-[129.500px]">
        <div className="w-[398.500px] text-[16px] leading-[22px] text-[#8b8b8b]">
          <p className="-mt-px">Share your success with your social networks to see if<br />your friends are able to solve it.</p>
          <div className="ml-[135.500px] mt-[20px] flex gap-[4.300px]">
            <span className="flex h-7 w-7 items-center justify-center rounded-[2px] bg-[#0e69b6] text-white"><FaLinkedinIn size={24} /></span>
            <span className="flex h-7 w-7 items-end justify-end rounded-[2px] bg-[#474a9d] pr-[2px] text-white"><FaFacebookF size={23} /></span>
            <span className="flex h-7 w-7 items-center justify-center rounded-[2px] bg-[#18a3e3] text-white"><FaTwitter size={18} /></span>
            <span className="flex h-7 w-7 items-center justify-center rounded-[2px] bg-[#d9000d] pb-1.5 font-['Liberation_Serif'] text-[26px] leading-none text-white">g<span className="text-[14px] leading-none">+</span></span>
          </div>
          <p className="mt-[24px]">Our engineers also love a good puzzle. Please provide<br />your contact information for the chance to hear about<br />some of the challenges our engineers are working to<br />solve.</p>
        </div>
        <div className="-mt-px ml-[18px] w-[400px]">
          <div className="h-[357px] border border-[#dadbdc] bg-[#cacccd] pl-5 pt-[21px]">
            <div className="-ml-[0.5px]">
              <Field label="First name" value="Marlon Aurelio" />
              <Field label="Last name" value="Garcia Morales" />
              <Field label="Email" value="1595@holbertonschool.com" />
              <Field label="LinkedIn profile URL" value="www.linkedin.com/in/marlonagarciam" />
              <p className="text-[13px] font-bold leading-4 text-[#e3002f]">Sorry, something went wrong. Please try again.</p>
              <button className="mt-[15px] block h-[31px] w-[72px] rounded-[3px] border border-[#1f4888] bg-linear-to-b from-[#306dc2] to-[#2a569c] text-[13px] font-bold text-white [text-shadow:0_-1px_0_#1d4380]">Submit</button>
            </div>
          </div>
          <p className="-ml-[0.5px] mt-5 whitespace-nowrap text-[13px] leading-4 text-[#8b8b8b]">We may use the data you provide to contact you with information<br />about opportunities at LinkedIn. We do not share your personal data<br />with advertisers. To learn more, see <span className="text-[#0e6fbe]">LinkedIn's Privacy Policy</span></p>
        </div>
      </div>
    </main>
  );
}

const ShareBar = () => (
  <div className="absolute left-[697px] top-[1028px] flex h-[45px] w-[605px] items-center border border-b-2 border-[#bcbcbc] border-b-[#a9a9a9] bg-[#f6f5f4] pl-[10px] font-['Open_Sans'] text-[14.500px] text-[#3f4448] shadow-[0_1px_1px_#ccc]">
    <span className="h-3 w-[6px] border-x-2 border-[#cfcfce]" />
    <Fit w={333} className="ml-[10px]">meet.google.com está compartiendo tu pantalla.</Fit>
    <span className="ml-[10px] flex h-8 w-[162px] items-center justify-center rounded-full bg-[#5779ec] font-semibold text-white"><Fit w={130}>Dejar de compartir</Fit></span>
    <Fit w={52} className="ml-2.5 border-b border-[#4d55d8] leading-[18px] text-[#4d55d8]">Ocultar</Fit>
  </div>
);

export default function App() {
  return (
    <div className="relative flex h-[1080px] w-[1920px] flex-col overflow-hidden bg-[#f1f1f1]">
      <TopBar />
      <div className="flex min-h-0 flex-1">
        <Dock />
        <div className="flex min-w-0 flex-1 flex-col">
          <Tabs />
          <Toolbar />
          <Bookmarks />
          <div className="flex min-h-0 flex-1">
            <div className="flex w-[1827px] flex-col bg-[#f1f1f1]">
              <SiteHeader />
              <Puzzle />
            </div>
            <div className="flex flex-1 flex-col items-center justify-between bg-[#f1f1f1] py-1.5">
              <svg width="7" height="4"><path d="M3.500 0L7 4H0z" fill="#a3a3a3" /></svg>
              <div className="mb-auto mt-[5px] h-[765px] w-[11px] bg-[#c1c1c1]" />
              <svg width="7" height="4"><path d="M3.500 4L7 0H0z" fill="#505050" /></svg>
            </div>
          </div>
        </div>
      </div>
      <ShareBar />
    </div>
  );
}
